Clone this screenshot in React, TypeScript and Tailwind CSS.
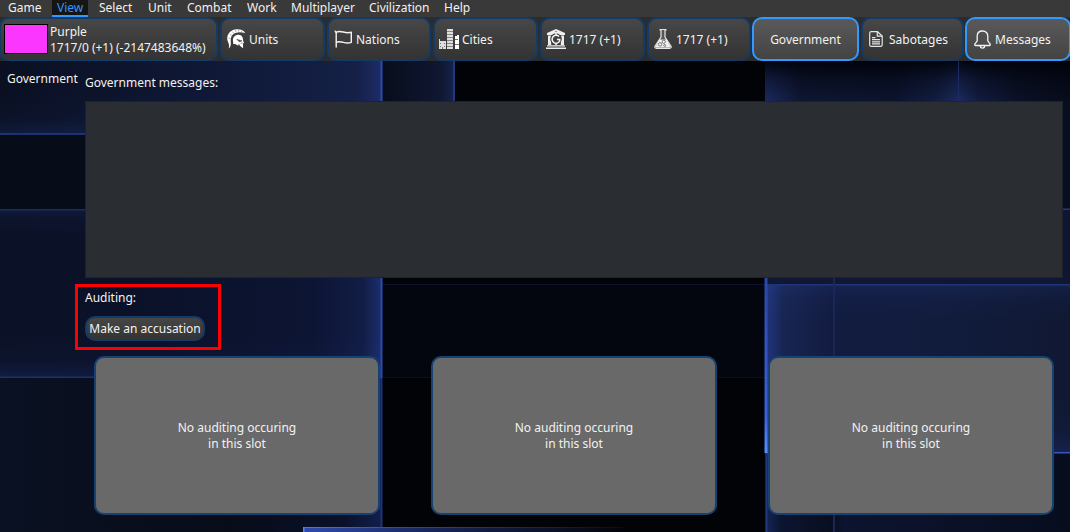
import React from 'react';

type MenuEntry = { label: string; box: string };

const menu: MenuEntry[] = [
  { label: 'Game', box: 'w-[49px]' },
  { label: 'View', box: 'w-[36px] mr-[6px] bg-[#151515] text-[#3399ff] shadow-[inset_0_-2px_0_#3399ff]' },
  { label: 'Select', box: 'w-[49px]' },
  { label: 'Unit', box: 'w-[39px]' },
  { label: 'Combat', box: 'w-[60px]' },
  { label: 'Work', box: 'w-[44px]' },
  { label: 'Multiplayer', box: 'w-[78px]' },
  { label: 'Civilization', box: 'w-[75px]' },
  { label: 'Help', box: 'w-[40px]' },
];

function Wallpaper() {
  return (
    <svg className="absolute inset-0 h-[532px] w-[1070px]" viewBox="0 0 1070 532" aria-hidden="true">
      <defs>
        <linearGradient id="topLeft" x1="0" y1="0" x2="1" y2="0">
          <stop offset="0" stopColor="#0a1022" />
          <stop offset=".55" stopColor="#0f1836" />
          <stop offset=".93" stopColor="#152047" />
          <stop offset="1" stopColor="#1c2c66" />
        </linearGradient>
        <linearGradient id="second" x1="0" y1="0" x2="1" y2="0">
          <stop offset="0" stopColor="#080d1c" />
          <stop offset=".8" stopColor="#0f1731" />
          <stop offset="1" stopColor="#16234e" />
        </linearGradient>
        <linearGradient id="midLeft" x1="0" y1="0" x2="1" y2="0">
          <stop offset="0" stopColor="#0b1227" />
          <stop offset=".35" stopColor="#0b1128" />
          <stop offset=".82" stopColor="#0d1534" />
          <stop offset=".95" stopColor="#121d46" />
          <stop offset="1" stopColor="#1c2e6e" />
        </linearGradient>
        <linearGradient id="lowLeft" x1="0" y1="0" x2="1" y2="0">
          <stop offset="0" stopColor="#0a1122" />
          <stop offset=".6" stopColor="#080c19" />
          <stop offset=".9" stopColor="#0a1129" />
          <stop offset="1" stopColor="#121f4c" />
        </linearGradient>
        <linearGradient id="glowDown" x1="0" y1="0" x2="0" y2="1">
          <stop offset="0" stopColor="#2846a8" stopOpacity="0" />
          <stop offset=".6" stopColor="#2846a8" stopOpacity=".05" />
          <stop offset="1" stopColor="#2846a8" stopOpacity=".2" />
        </linearGradient>
        <linearGradient id="glowUp" x1="0" y1="0" x2="0" y2="1">
          <stop offset="0" stopColor="#2846a8" stopOpacity=".17" />
          <stop offset=".4" stopColor="#2846a8" stopOpacity=".05" />
          <stop offset="1" stopColor="#2846a8" stopOpacity="0" />
        </linearGradient>
        <linearGradient id="right" x1="0" y1="0" x2="1" y2="0">
          <stop offset="0" stopColor="#223680" />
          <stop offset=".06" stopColor="#182552" />
          <stop offset=".22" stopColor="#121c40" />
          <stop offset=".6" stopColor="#111c3d" />
          <stop offset="1" stopColor="#101832" />
        </linearGradient>
        <linearGradient id="lowRight" x1="0" y1="0" x2="1" y2="0">
          <stop offset="0" stopColor="#17265c" />
          <stop offset=".05" stopColor="#0c1531" />
          <stop offset=".22" stopColor="#090e1f" />
          <stop offset=".26" stopColor="#0c142f" />
          <stop offset="1" stopColor="#080d1e" />
        </linearGradient>
        <linearGradient id="topRight" x1="0" y1="0" x2="1" y2="0">
          <stop offset="0" stopColor="#1a2a60" />
          <stop offset=".12" stopColor="#0e1733" />
          <stop offset=".42" stopColor="#0c142e" />
          <stop offset=".56" stopColor="#121d42" />
          <stop offset=".635" stopColor="#1c2b60" />
          <stop offset=".7" stopColor="#121c40" />
          <stop offset=".82" stopColor="#0b1229" />
          <stop offset="1" stopColor="#080c1b" />
        </linearGradient>
        <linearGradient id="shade" x1="0" y1="0" x2="0" y2="1">
          <stop offset="0" stopColor="#000208" stopOpacity=".95" />
          <stop offset=".45" stopColor="#000208" stopOpacity=".4" />
          <stop offset="1" stopColor="#000208" stopOpacity="0" />
        </linearGradient>
        <linearGradient id="beam" x1="0" y1="0" x2="0" y2="1">
          <stop offset="0" stopColor="#2b46a5" />
          <stop offset=".8" stopColor="#3b60d8" />
          <stop offset="1" stopColor="#568eff" />
        </linearGradient>
        <linearGradient id="footEdge" x1="0" y1="0" x2="1" y2="0">
          <stop offset="0" stopColor="#4c78f0" />
          <stop offset=".25" stopColor="#304fbd" />
          <stop offset=".7" stopColor="#17265e" />
          <stop offset="1" stopColor="#070b18" />
        </linearGradient>
        <linearGradient id="footFill" x1="0" y1="0" x2="1" y2="0">
          <stop offset="0" stopColor="#2f4bb0" />
          <stop offset=".4" stopColor="#17255a" />
          <stop offset="1" stopColor="#030409" />
        </linearGradient>
      </defs>
      <rect width="1070" height="532" fill="#020307" />
      <rect y="60" width="382" height="75" fill="url(#topLeft)" />
      <rect y="95" width="382" height="40" fill="url(#glowDown)" />
      <rect x="382" y="60" width="73" height="150" fill="url(#second)" />
      <rect y="135" width="382" height="74" fill="#070c19" />
      <rect y="133" width="382" height="2" fill="#1e3273" />
      <rect y="209" width="382" height="169" fill="url(#midLeft)" />
      <rect y="209" width="382" height="24" fill="url(#glowUp)" />
      <rect y="338" width="382" height="40" fill="url(#glowDown)" />
      <rect y="209" width="382" height="1.5" fill="#1a2b66" />
      <rect y="376.5" width="382" height="1.5" fill="#1c2f6e" />
      <rect y="378" width="382" height="154" fill="url(#lowLeft)" />
      <rect x="382" y="284" width="384" height="94" fill="#03050f" />
      <rect x="382" y="284" width="384" height="1" fill="#0b132e" />
      <rect x="382" y="377" width="384" height="1" fill="#080f25" />
      <rect x="453" y="60" width="2" height="150" fill="#23377e" />
      <rect x="380.500" y="60" width="2" height="318" fill="#2d4aad" />
      <rect x="380.500" y="378" width="2" height="154" fill="#1e3278" />

      <rect x="765" y="60" width="305" height="149" fill="url(#topRight)" />
      <rect x="765" y="60" width="305" height="42" fill="url(#shade)" />
      <rect x="958" y="61" width="1" height="41" fill="#1b2a60" />
      <rect x="1063" y="101" width="7" height="108" fill="#090f22" />
      <rect x="1063" y="209" width="7" height="76" fill="#0e1633" />
      <rect x="1063" y="208.500" width="7" height="1.500" fill="#24397f" />
      <rect x="765" y="276" width="305" height="9" fill="#0f1735" />
      <rect x="765" y="285" width="305" height="168" fill="url(#right)" />
      <rect x="765" y="285" width="305" height="34" fill="url(#glowUp)" />
      <rect x="765" y="400" width="305" height="52" fill="url(#glowDown)" />
      <rect x="765" y="284" width="305" height="1.500" fill="#20347a" />
      <rect x="765" y="453" width="305" height="79" fill="url(#lowRight)" />
      <rect x="765" y="452" width="305" height="1.500" fill="#3555c5" />
      <rect x="833" y="278" width="2" height="254" fill="#182757" />
      <rect x="764.500" y="278" width="3" height="175" fill="url(#beam)" />
      <rect x="766" y="453" width="1.500" height="79" fill="#20357c" />

      <rect x="303" y="527" width="320" height="5" fill="url(#footFill)" />
      <rect x="303" y="527" width="320" height="1" fill="url(#footEdge)" />
      <rect x="303" y="527" width="1.500" height="5" fill="#5383f5" />
    </svg>
  );
}

function HelmetIcon() {
  return (
    <svg className="h-5 w-[19px]" viewBox="0 0 19 20" fill="#fff">
      <path d="M18.300 3.900C16.500 1.300 13.500.2 10 .3 4 .5.300 4.400.200 9.600c0 2.200 1 3.300 1.600 5.400.4 1.600.3 3-.2 4.600 1.800-1.600 2.500-3.800 2.200-6.200C3.300 8.400 4.900 5 8.400 3.900c3-.9 6-.8 9.900 0z" />
      <path d="M3 5.200l1.700 1.100M5.300 2.600l1.400 1.700M8.300 1l.7 2M11.700.5v2.200M15 1.500l-.6 1.600M1.300 9.200l2 .1" stroke="#5c5c5c" strokeWidth=".5" />
      <path d="M5.900 11C6 8 8.400 5.800 11.400 5.800c2.400 0 4.200 1.400 4.500 3.800l.2 2.200 1 2.200-1.100.3.100 5-3-2.300-1.300-2.300-.6 2C9.700 15.600 8 15 6 14.800c.5-1.200-.1-2.300-.1-3.800z" />
      <path d="M9.800 10.300l5.200 1.600-2.700.9zM13.600 14.300l2.200-.4" fill="#3c3c3c" stroke="#3c3c3c" strokeWidth=".5" />
    </svg>
  );
}

function FlagIcon() {
  return (
    <svg className="h-[18px] w-[19px]" viewBox="0 0 19 18" fill="none" stroke="#f4f4f4" strokeWidth="1.400" strokeLinejoin="round" strokeLinecap="round">
      <path d="M2.200 17V2.200C7.500-.4 10.500 4.400 17.300 2.200v10.100C11 14.800 8 10 2.200 12.300" />
      <path d="M1.200 1.200l1 1.500" />
    </svg>
  );
}

function CityIcon() {
  return (
    <svg className="h-5 w-5" viewBox="0 0 20 20" shapeRendering="crispEdges">
      <path d="M8 0h6v20H8zM0 10h1v2h6v8H0z" fill="#dedede" />
      <path d="M16 7h2V6h2v14h-4z" fill="#fff" />
      <path d="M8 2h6v1H8zM8 5h6v1H8zM8 8h6v1H8zM8 11h6v1H8zM8 14h6v1H8zM8 17h6v1H8z" fill="#858585" />
      <path d="M1 14h1v1H1zM5 14h1v1H5zM1 17h1v1H1zM5 17h1v1H5zM3 18h1v2H3zM16 10h3v1h-3zM16 15h4v1h-4z" fill="#777" />
    </svg>
  );
}

function BankIcon() {
  return (
    <svg className="h-5 w-5" viewBox="0 0 20 20">
      <path d="M10 0l9 4v2H1V4z" fill="#f0f0f0" />
      <path d="M2 6.500h3.200v9.500H2zM14.800 6.500H18v9.500h-3.200zM1 16.200h18v1.300H1zM0 18.400h20V20H0z" fill="#eee" />
      <circle cx="10" cy="10" r="5.800" fill="#404040" />
      <path d="M13 7.500A4 4 0 1 0 13.700 12V10.400h-2.700M10 3.900v2.300M10 13.800V16.200" fill="none" stroke="#f5f5f5" strokeWidth="1.500" />
      <circle cx="10" cy="2.500" r=".8" fill="#777" />
    </svg>
  );
}

function FlaskIcon() {
  return (
    <svg className="h-5 w-[18px]" viewBox="0 0 18 20" fill="none" stroke="#e8e8e8">
      <path d="M5.500.8h7" strokeWidth="1.500" />
      <path d="M7 1v7L1 17.200Q.3 19.300 2.400 19.300h13.200q2.100 0 1.400-2.100L11 8V1" fill="#555" strokeWidth="1.200" />
      <path d="M5.500 10.500l-3.900 7q-.3 1 .9 1h13q1.200 0 .9-1l-3.900-7z" fill="#f0f0f0" stroke="none" />
      <g fill="#f4f4f4" stroke="#5a5a5a" strokeWidth=".8">
        <circle cx="9.700" cy="12.800" r="1.600" />
        <circle cx="6" cy="15.400" r="1.700" />
        <circle cx="10.700" cy="16.500" r="1" />
      </g>
    </svg>
  );
}

function DocumentIcon() {
  return (
    <svg className="h-4 w-[14px]" viewBox="0 0 14 16" fill="none" stroke="#e6e6e6" strokeWidth="1.200">
      <path d="M2.300.7H8.500L13.200 5v8.700q0 1.600-1.600 1.600H2.300Q.7 15.300.7 13.700V2.300Q.7.7 2.300.7z" />
      <path d="M8.300.7v4.500h4.900M3 6.600h3.500M3 8.700h8M3 10.800h8M3 12.900h8" />
    </svg>
  );
}

function BellIcon() {
  return (
    <svg className="h-[19px] w-[17px]" viewBox="0 0 17 19" fill="none" stroke="#f4f4f4" strokeWidth="1.300" strokeLinejoin="round">
      <path d="M8.500 1C5 1 3.200 3.300 3.200 6.200v4.300c0 1.600-2.500 2.700-2.500 4.200 0 .5.300.8.800.8h14c.5 0 .8-.3.8-.8 0-1.500-2.500-2.600-2.500-4.200V6.200C13.800 3.300 12 1 8.500 1z" />
      <path d="M6.300 15.700c0 3.200 4.400 3.200 4.400 0" />
    </svg>
  );
}

type ToolProps = { className: string; active?: boolean; icon?: React.ReactNode; children: React.ReactNode };

function ToolButton({ className, active, icon, children }: ToolProps) {
  const tone = active
    ? 'border-[#3399ff] from-[#5b5b5b] to-[#424242]'
    : 'border-[#143a66] from-[#484848] to-[#323232]';
  return (
    <button className={`flex h-11 shrink-0 items-center rounded-[10px] border-2 bg-linear-to-b bg-origin-border text-left ${tone} ${className}`}>
      {icon}
      <span className="pt-[2px]">{children}</span>
    </button>
  );
}

function Slot() {
  return (
    <div className="flex h-[159px] w-[286px] items-center justify-center rounded-[10px] border-2 border-[#164272] bg-[#696969] text-center leading-4">
      <p>
        No auditing occuring
        <br />
        in this slot
      </p>
    </div>
  );
}

export default function App() {
  return (
    <div className="relative h-[532px] w-[1070px] overflow-hidden font-['Noto_Sans',sans-serif] text-[12px] leading-4 whitespace-nowrap text-[#f2f2f2]">
      <Wallpaper />
      <div className="relative flex h-full flex-col">
        <nav className="flex h-[17px] shrink-0 bg-[#393939] pl-[3px] leading-[15px]">
          {menu.map(({ label, box }) => (
            <div key={label} className={`h-[17px] shrink-0 pl-[5px] ${box}`}>
              {label}
            </div>
          ))}
        </nav>

        <header className="flex h-11 shrink-0 bg-[#2a2d30]">
          <ToolButton
            className="-ml-px mr-[2px] w-[219px] gap-[2px] pl-[3px]"
            icon={<span className="h-[30px] w-11 border border-black bg-[#fb37ff]" />}
          >
            Purple
            <br />
            1717/0 (+1) (-2147483648%)
          </ToolButton>
          <ToolButton className="mr-[2px] w-[105px] gap-[3px] pl-[5px]" icon={<HelmetIcon />}>Units</ToolButton>
          <ToolButton className="mr-[2px] w-[104px] gap-[3px] pl-[5px]" icon={<FlagIcon />}>Nations</ToolButton>
          <ToolButton className="mr-[2px] w-[105px] gap-[3px] pl-1" icon={<CityIcon />}>Cities</ToolButton>
          <ToolButton className="mr-[2px] w-[105px] gap-[3px] pl-1" icon={<BankIcon />}>1717 (+1)</ToolButton>
          <ToolButton className="mr-px w-[104px] gap-1 pl-[5px]" icon={<FlaskIcon />}>1717 (+1)</ToolButton>
          <ToolButton active className="mr-[2px] w-[107px] justify-center">Government</ToolButton>
          <ToolButton className="mr-px w-[103px] gap-[6px] pl-[6px]" icon={<DocumentIcon />}>Sabotages</ToolButton>
          <ToolButton active className="w-[106px] gap-1 pl-[7px]" icon={<BellIcon />}>Messages</ToolButton>
        </header>

        <main className="flex flex-1">
          <aside className="w-[85px] shrink-0 pl-[7px] pt-[10px]">Government</aside>
          <section className="flex w-[978px] flex-col">
            <h2 className="pt-[14px]">Government messages:</h2>
            <div className="mt-[10px] h-[177px] shrink-0 border border-[#202326] bg-[#2a2d31]" />
            <div className="relative flex flex-col items-start pt-3">
              <div className="pointer-events-none absolute -left-[10px] top-[6px] h-[66px] w-[146px] border-[3px] border-[#fc0004]" />
              <h2>Auditing:</h2>
              <button className="mt-[10px] flex h-[25px] w-[120px] items-center justify-center rounded-[10px] border-2 border-[#143a66] bg-linear-to-b bg-origin-border from-[#484848] to-[#323232]">
                Make an accusation
              </button>
            </div>
            <div className="ml-[9px] mt-[15px] flex gap-[51px]">
              <Slot />
              <Slot />
              <Slot />
            </div>
          </section>
        </main>
      </div>
    </div>
  );
}
